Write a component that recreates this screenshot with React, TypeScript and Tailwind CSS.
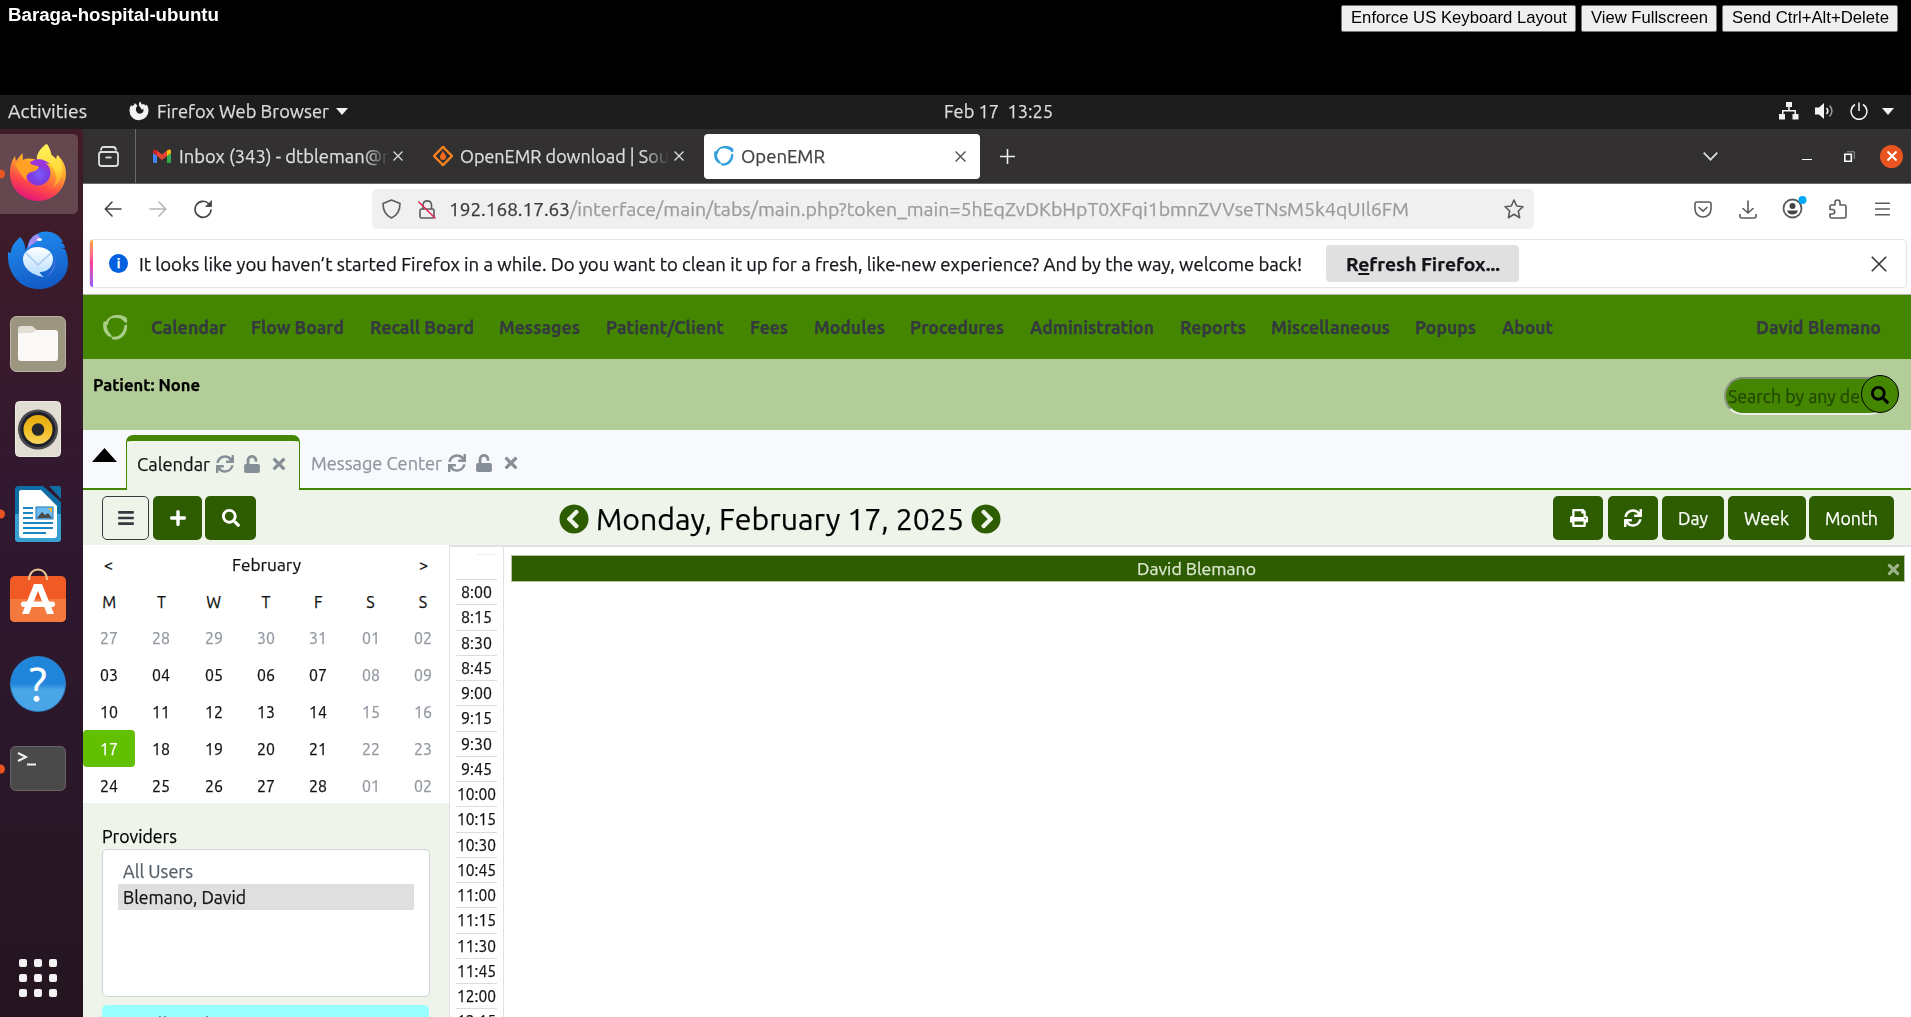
import { useLayoutEffect, useRef, type ReactNode } from "react";
import {
  FaBars, FaPlus, FaSearch, FaSync, FaUnlock, FaTimes, FaPrint, FaChevronCircleLeft, FaChevronCircleRight,
} from "react-icons/fa";

/* A single line of text stretched to an exact width. */
function T({ w, className = "", children }: { w: number; className?: string; children: ReactNode }) {
  const ref = useRef<HTMLSpanElement>(null);
  useLayoutEffect(() => {
    const el = ref.current;
    if (!el) return;
    el.style.transform = "none";
    const natural = el.getBoundingClientRect().width;
    el.style.transform = `scaleX(${w / natural})`;
  }, [w]);
  return (
    <span className={"block shrink-0 text-left whitespace-pre " + className} style={{ width: w }}>
      <span ref={ref} className="inline-block origin-left">{children}</span>
    </span>
  );
}

function HostBar() {
  const btn = "flex h-[27px] items-center justify-center rounded-[2px] border border-[#767676] bg-[#efefef] text-[17px] text-black pb-[2px]";
  return (
    <header className="flex h-[95px] items-start bg-black font-['Liberation_Sans',sans-serif]">
      <T w={211} className="mt-[3px] ml-2 text-[18px] leading-6 font-bold text-white">Baraga-hospital-ubuntu</T>
      <div className="mt-[5px] mr-[13px] ml-auto flex gap-[5px]">
        <button className={btn + " w-[235px]"}><T w={216}>Enforce US Keyboard Layout</T></button>
        <button className={btn + " w-[136px]"}><T w={117}>View Fullscreen</T></button>
        <button className={btn + " w-[176px]"}><T w={157}>Send Ctrl+Alt+Delete</T></button>
      </div>
    </header>
  );
}

function TopBar() {
  return (
    <div className="flex h-[34px] shrink-0 items-center bg-[#1d1d1d] pb-[2px] text-[18px] leading-none text-[#dcdcdc]">
      <T w={79} className="ml-2">Activities</T>
      <svg className="ml-[42px] shrink-0" width="20" height="20" viewBox="0 0 20 20" fill="none">
        <path d="M11 0.5c1 1 1.4 2 1.5 3 2-.4 3.3.2 4.2 1.2l.8-1.2c1.3 1.700 2 3.800 2 6A9.500 9.500 0 0 1 .5 10c0-2.500.6-4.600 1.700-6l.8 1.500c.6-.8 1.300-1.400 2.200-1.700L5.500 2l3 2.500-1.300 2c-1 2.500.7 6.200 3.300 6.200 3.200 0 4.600-2.200 3.800-5.200-.4 1-1 1.300-1.600 1.300C12 6.500 10.200 6 10 4c-.1-1.500.2-2.700 1-3.500z" fill="#f2f2f2" />
      </svg>
      <T w={172} className="ml-2">Firefox Web Browser</T>
      <svg className="ml-[7px]" width="12" height="7"><path d="M0 0h12L6 7z" fill="#f2f2f2" /></svg>
      <T w={109} className="ml-[596px]">Feb 17  13:25</T>
      <div className="ml-auto flex items-center pr-[17px] text-[#f2f2f2]">
        <svg className="mr-4" width="20" height="18" viewBox="0 0 20 18" fill="currentColor">
          <path d="M7 0h6v5H7zM0 12h6v5.500H0zM13.500 12h6v5.500h-6z" />
          <path d="M9.200 5h1.600v3H17v4h-1.500V9.500h-11V12H3V8h6.200z" />
        </svg>
        <svg className="mr-4" width="19" height="18" viewBox="0 0 19 18">
          <path d="M0 5.500h4L9 1v16l-5-4.500H0z" fill="currentColor" />
          <path d="M11.500 6c1.600 1.800 1.600 4.200 0 6" stroke="currentColor" strokeWidth="1.600" fill="none" />
          <path d="M14.500 3.500c3.200 3.200 3.200 7.800 0 11" stroke="#999" strokeWidth="1.600" fill="none" />
        </svg>
        <svg className="mr-[14px]" width="18" height="18" viewBox="0 0 18 18" fill="none" stroke="currentColor" strokeWidth="1.500">
          <path d="M9 .5V9M5 2.500a7.900 7.900 0 1 0 8 0" />
        </svg>
        <svg width="12" height="7"><path d="M0 0h12L6 7z" fill="currentColor" /></svg>
      </div>
    </div>
  );
}

function FirefoxIcon() {
  return (
    <svg width="56" height="58" viewBox="0 0 56 58">
      <defs>
        <linearGradient id="ffBody" x1="0.75" y1="0" x2="0.35" y2="1">
          <stop offset="0" stopColor="#ffe84b" /><stop offset="0.4" stopColor="#ffab2c" />
          <stop offset="0.72" stopColor="#ff4a48" /><stop offset="1" stopColor="#e3147c" />
        </linearGradient>
        <linearGradient id="ffFlame" x1="0.5" y1="0" x2="0.6" y2="1">
          <stop offset="0" stopColor="#fff25a" /><stop offset="0.6" stopColor="#ffd93c" /><stop offset="1" stopColor="#ff9a2b" />
        </linearGradient>
        <radialGradient id="ffGlobe" cx="0.55" cy="0.55" r="0.6">
          <stop offset="0" stopColor="#7b5cff" /><stop offset="0.6" stopColor="#7a3be0" /><stop offset="1" stopColor="#a531d6" />
        </radialGradient>
      </defs>
      <path d="M36 1c3 3 5 7 5.500 11 2 1 4 3 5.500 5l.500-5c6 5.500 8.500 12 8.500 19A28 27 0 0 1 0 31c0-8 1.500-13 5-18l1 5 6.500-8 .500 7c4-2 10-2 14 1 0-7 3-12 9-17z" fill="url(#ffBody)" />
      <path d="M37 1c-8 5-11 11-10 17 8-1 17 4 19 14 1 5-1 10-4 13 7-4 11-12 10-20-.500-5-2-9-5-13l-1 5c-1-2-3-4-5-5C40.500 8 39.500 4 37 1z" fill="url(#ffFlame)" />
      <circle cx="28" cy="30" r="12.500" fill="url(#ffGlobe)" />
      <path d="M18 22c3-6 14-9 22-1-3-1-5-1-7 0 4 2 6 5 6 8-4-4-8-6-12-5z" fill="#9a35dc" />
      <path d="M5 21c5-5 12-5 16 0 3 2 6 1 8 3-2 5-7 4-10 6-3 2-3 5-2 8-4-3-8-9-12-17z" fill="#ffa022" />
    </svg>
  );
}

function ThunderbirdIcon() {
  return (
    <svg width="60" height="58" viewBox="0 0 60 58">
      <defs>
        <linearGradient id="tbBody" x1="0.3" y1="0" x2="0.6" y2="1">
          <stop offset="0" stopColor="#1f8df0" /><stop offset="1" stopColor="#1359c4" />
        </linearGradient>
        <linearGradient id="tbMail" x1="0" y1="0" x2="0" y2="1">
          <stop offset="0" stopColor="#ffffff" /><stop offset="1" stopColor="#b3dcff" />
        </linearGradient>
      </defs>
      <path d="M12 6c-5 5-9 9-9 16L0 21c-1 14 4 24 12 31 12 9 30 8 40-2 9-8 10-21 5-32l-4-1h4c0-3-2-5-5-6h3C50 1 38-2 29 3c-5 2-8 6-9 11l-3 6C18 15 16 10 12 6z" fill="url(#tbBody)" />
      <path d="M20 17c0-6 3-11 9-14 3 2 4 5 1 7-3 1-5 3-10 7z" fill="#a58cf0" />
      <ellipse cx="31.500" cy="8.500" rx="2.500" ry="1.600" fill="#fff" />
      <path d="M46 24c2 10-2 20-10 22 8-1 13-10 10-22z" fill="#7a7bf0" />
      <path d="M30 16c8 0 15 5 15 12s-5 13-13 13c-1 0 1 3 4 5-8-1-20-6-21-17-.500-8 7-13 15-13z" fill="url(#tbMail)" />
      <path d="M18 22l12 12 13-12" fill="none" stroke="#a9cdee" strokeWidth="1.600" />
    </svg>
  );
}

function FilesIcon() {
  return (
    <svg width="56" height="56" viewBox="0 0 56 56">
      <rect x=".5" y=".5" width="55" height="55" rx="6" fill="#9c957f" stroke="#b9b3a3" />
      <path d="M8 14c0-3 1-4 4-4h10l5 4h5v8H8z" fill="#e2ded5" />
      <path d="M8 19c0-2 1-2 3-2h11l5-3h18c2 0 3 1 3 3v25c0 2-1 3-3 3H11c-2 0-3-1-3-3z" fill="#faf9f8" />
    </svg>
  );
}

function MusicIcon() {
  return (
    <svg width="46" height="56" viewBox="0 0 46 56">
      <defs>
        <linearGradient id="gold" x1="0" y1="0" x2="0" y2="1">
          <stop offset="0" stopColor="#e3a90d" /><stop offset="0.6" stopColor="#f3c02a" /><stop offset="1" stopColor="#f8d463" />
        </linearGradient>
      </defs>
      <rect x=".5" y=".5" width="45" height="55" rx="4" fill="#e2ddd3" stroke="#eeeae2" />
      <circle cx="23" cy="28.500" r="20" fill="#4a4b50" />
      <circle cx="23" cy="28.500" r="17.500" fill="#20202c" />
      <circle cx="23" cy="28.500" r="14.500" fill="url(#gold)" />
      <circle cx="23" cy="28.500" r="6.300" fill="#26272a" />
    </svg>
  );
}

function WriterIcon() {
  return (
    <svg width="46" height="56" viewBox="0 0 46 56">
      <path d="M4 0h24l18 16v36c0 3-1 4-4 4H4c-3 0-4-1-4-4V4c0-3 1-4 4-4z" fill="#0f6ea5" />
      <path d="M0 28h46v24c0 3-1 4-4 4H4c-3 0-4-1-4-4z" fill="#3aa0d2" />
      <path d="M34 0h10c1 0 2 1 2 2v11z" fill="#0f6ea5" />
      <path d="M6 4h20l16 16v29c0 2-1 3-3 3H7c-2 0-3-1-3-3V6c0-1 1-2 2-2z" fill="#fff" />
      <path d="M8 22h10M8 27h10M8 32h10M8 37h30M8 42h30M8 47h23" stroke="#1b86c4" strokeWidth="2.200" />
      <rect x="21" y="21" width="17" height="12" fill="#6cbcf0" stroke="#1b78b8" />
      <path d="M22 32l5-6 3 3 3-2 4 5z" fill="#4b4b4b" />
      <path d="M33 22h4v5z" fill="#f4b52c" />
    </svg>
  );
}

function StoreIcon() {
  return (
    <svg width="56" height="54" viewBox="0 0 56 54">
      <rect x="0" y="8" width="56" height="46" rx="5" fill="#f15a24" />
      <path d="M0 31h56v18c0 3-2 5-5 5H5c-3 0-5-2-5-5z" fill="#f3793f" />
      <path d="M19 12c0-14 18-14 18 0" fill="none" stroke="#eec890" strokeWidth="2" />
      <path d="M24 16h8l12 30h-7l-9-23-9 23h-7z" fill="#fff" />
      <rect x="11" y="33.500" width="34" height="5.500" rx="2.700" fill="#fff" />
    </svg>
  );
}

function Launcher() {
  const dot = <span className="absolute top-1/2 -left-1 size-[9px] -translate-y-1/2 rounded-full bg-[#e95420]" />;
  return (
    <aside className="flex w-[83px] shrink-0 flex-col bg-linear-to-b from-[#421c26] via-[#301830] via-45% to-[#241520]">
      <div className="relative mt-[5px] flex h-[80px] w-[78px] justify-center rounded-r-[5px] bg-[#65484f] pt-[9px] pr-[2px]">
        <FirefoxIcon />{dot}
      </div>
      <div className="mt-[17px] ml-2"><ThunderbirdIcon /></div>
      <div className="mt-[27px] ml-[10px]"><FilesIcon /></div>
      <div className="mt-[29px] ml-[15px]"><MusicIcon /></div>
      <div className="relative mt-[29px] pl-[15px]"><WriterIcon />{dot}</div>
      <div className="mt-[26px] ml-[10px]"><StoreIcon /></div>
      <div className="mt-[34px] ml-[10px] flex size-[56px] items-center justify-center rounded-full border border-[#2b80c5] bg-linear-to-b from-[#2086dc] from-50% to-[#49a5e6] to-60% text-[46px] leading-none text-white">
        <span>?</span>
      </div>
      <div className="relative mt-[34px] flex h-[45px] items-center pl-[10px]">
        <svg width="56" height="45" viewBox="0 0 56 45">
          <rect x=".5" y=".5" width="55" height="44" rx="5" fill="#4a4a4a" stroke="#6a6368" />
          <path d="M8 7l8 4-8 4M17 18.500h9" fill="none" stroke="#f2f2f2" strokeWidth="2" />
        </svg>
        {dot}
      </div>
      <div className="mt-auto mb-5 ml-[19px] grid w-[38px] grid-cols-3 gap-[7px]">
        {Array.from({ length: 9 }, (_, i) => <span key={i} className="size-2 rounded-[2px] bg-[#f2f2f2]" />)}
      </div>
    </aside>
  );
}

function X({ size, color, sw = 1.3 }: { size: number; color: string; sw?: number }) {
  return (
    <svg className="shrink-0" width={size} height={size} viewBox="0 0 10 10" stroke={color} strokeWidth={(sw * 10) / size}>
      <path d="M.5.5l9 9M9.500.5l-9 9" />
    </svg>
  );
}

/* Ring made of three overlapping brush strokes. */
function EmrLogo({ size, color }: { size: number; color: string }) {
  return (
    <svg className="shrink-0" width={size} height={size} viewBox="0 0 26 26" fill={color}>
      <path d="M4 5.500C9-1.500 18-1.500 24 2.500c1 .8 1.200 1.500 1 5.500l-2.500-.5C19 2 10 1.500 4 5.500z" />
      <path d="M.5 7c-1.500 8 1.500 14 7.500 16l1-2C5 18 3 13 4 6.500z" />
      <path d="M25 10c.5 5-1 9-4 12-3 3-7 4-11 3.500L8 22c7 2 13-1 14.500-11.500z" />
      <path d="M2.500 10c-.5-4 3-7.500 7.500-8.500-2.500 2.500-4.500 4.500-5 9z" />
    </svg>
  );
}

function TabStrip() {
  return (
    <div className="flex h-[55px] shrink-0 items-center border-b border-[#6a696b] bg-[#323031] text-[18px] leading-none text-[#dedede]">
      <svg className="ml-[15px] shrink-0" width="21" height="21" viewBox="0 0 21 21" fill="none" stroke="#dedede" strokeWidth="1.800">
        <path d="M3 4.500c0-3 1-3.500 3-3.500h9c2 0 3 .5 3 3.500" />
        <rect x="1" y="6" width="19" height="14" rx="2.500" /><path d="M7.500 11.500h6" />
      </svg>
      <span className="ml-[16px] h-full w-px bg-[#6a696b]" />
      <svg className="ml-[17px] shrink-0" width="18" height="14" viewBox="0 0 18 14">
        <path d="M0 2v10.500c0 .8.500 1.500 1.300 1.500H4V6z" fill="#4285f4" />
        <path d="M18 2v10.500c0 .8-.5 1.500-1.300 1.500H14V6z" fill="#34a853" />
        <path d="M4 1.500l5 4 5-4V7L9 11 4 7z" fill="#ea4335" />
        <path d="M0 2.200C0 .2 2 0 4 1.500V7L0 4z" fill="#c5221f" />
        <path d="M18 2.200c0-2-2-2.200-4-.7V7l4-3z" fill="#fbbc04" />
      </svg>
      <div className="ml-2 w-[210px] overflow-hidden py-1 [mask-image:linear-gradient(to_right,black_88%,transparent)]">
        <T w={210}>Inbox (343) - dtbleman@r</T>
      </div>
      <span className="ml-[4px]"><X size={10} color="#dedede" /></span>
      <svg className="ml-[30px] shrink-0" width="20" height="20" viewBox="0 0 20 20">
        <path d="M11.500 1.500L10 .8 1 10l8.500 8.500M8.500 18.500l1.500.7L19 10 10.500 1.500" fill="none" stroke="#f58220" strokeWidth="2.400" />
        <path d="M9.800 4.500c.5 2.500 3.200 3.500 3.200 6.500 0 2-1.300 3-3 3s-3-1.200-3-3c0-3 2.500-3.500 2.800-6.500z" fill="#f26a1b" />
      </svg>
      <div className="ml-[7px] w-[209px] overflow-hidden py-1 [mask-image:linear-gradient(to_right,black_88%,transparent)]">
        <T w={209}>OpenEMR download | Sou</T>
      </div>
      <span className="ml-[5px]"><X size={10} color="#dedede" /></span>
      <div className="ml-[20px] flex h-[45px] w-[276px] items-center rounded-[4px] bg-white pr-[14px] text-[#3f3f44]">
        <span className="ml-[10px]"><EmrLogo size={20} color="#35a0de" /></span>
        <T w={84} className="ml-[7px]">OpenEMR</T>
        <span className="ml-auto"><X size={11} color="#4a4a4f" /></span>
      </div>
      <svg className="ml-[20px] shrink-0" width="15" height="15" stroke="#eee" strokeWidth="1.600"><path d="M7.500 0v15M0 7.500h15" /></svg>
      <svg className="ml-[688px] shrink-0" width="15" height="9" fill="none" stroke="#dedede" strokeWidth="1.700"><path d="M.7.700l6.800 7 6.800-7" /></svg>
      <span className="mt-[7px] ml-[84px] h-[1.500px] w-[10px] bg-white" />
      <svg className="ml-[32px] shrink-0" width="11" height="11" fill="none"><rect x=".8" y="3.300" width="6.500" height="7" stroke="#fff" strokeWidth="1.600" /><path d="M3 .8h7.300V8" stroke="#9a9a9a" /></svg>
      <span className="ml-[25px] flex size-[23px] items-center justify-center rounded-full bg-[#e95420]"><X size={10} color="#fff" sw={2} /></span>
    </div>
  );
}

function UrlBar() {
  const s = { fill: "none", stroke: "#5b5b60", strokeWidth: 1.6, strokeLinejoin: "round", strokeLinecap: "round" } as const;
  return (
    <div className="flex h-[55px] shrink-0 items-center bg-white pb-[5px] text-[18px] leading-none">
      <svg className="ml-[21px] shrink-0" width="18" height="16" {...s} stroke="#444"><path d="M17 8H1.500M8 1L1.300 8 8 15" /></svg>
      <svg className="ml-[27px] shrink-0" width="18" height="16" {...s} stroke="#b5b5b5"><path d="M1 8h15.500M10 1l6.700 7-6.700 7" /></svg>
      <svg className="ml-[27px] shrink-0" width="19" height="19" viewBox="0 0 19 19" {...s} stroke="#444"><path d="M17 10a8 8 0 1 1-2-6" /><path d="M17.500 1v5.500H12z" fill="#444" strokeWidth=".8" /></svg>
      <div className="ml-[159px] flex h-[40px] w-[1162px] items-center rounded-[5px] bg-[#f0f0f0]">
        <svg className="ml-[10px] shrink-0" width="19" height="20" viewBox="0 0 19 20" {...s}><path d="M9.500 1L18 4.500c0 7-2 11.500-8.500 14.500C3 16 1 11.500 1 4.500z" /></svg>
        <svg className="ml-[17px] shrink-0" width="18" height="20" viewBox="0 0 18 20" {...s}><rect x="2" y="10" width="14" height="9" rx="1.500" /><path d="M5 10V5.500a4.300 4.300 0 0 1 8.500 0V10" /><path d="M.8 3L17 19" stroke="#e22850" /></svg>
        <T w={121} className="ml-[13px] text-[#3a3a3e]">192.168.17.63</T>
        <T w={839} className="text-[#9b9b9d]">/interface/main/tabs/main.php?token_main=5hEqZvDKbHpT0XFqi1bmnZVVseTNsM5k4qUIl6FM</T>
        <svg className="mr-[10px] ml-auto shrink-0" width="20" height="20" viewBox="0 0 20 20" {...s}><path d="M10 1l2.700 6 6.300.7-4.700 4.300 1.300 6.700L10 15.300l-5.600 3.400 1.300-6.700L1 7.700 7.300 7z" /></svg>
      </div>
      <svg className="ml-[160px] shrink-0" width="18" height="17" viewBox="0 0 18 17" {...s}><path d="M3 1h12c1.500 0 2 .5 2 2v5c0 5-4 8-8 8s-8-3-8-8V3c0-1.500.5-2 2-2zM5 6.500l4 3.700 4-3.700" /></svg>
      <svg className="ml-[27px] shrink-0" width="18" height="19" viewBox="0 0 18 19" {...s}><path d="M9 1v12M4 8.500L9 13l5-4.500M1 14.500V16c0 1.500.5 2 2 2h12c1.500 0 2-.5 2-2v-1.500" /></svg>
      <svg className="ml-[25px] shrink-0 -mt-1" width="25" height="24" viewBox="0 0 25 24" {...s}>
        <circle cx="10.500" cy="13.500" r="9" strokeWidth="1.800" /><circle cx="10.500" cy="11" r="3" fill="#444" stroke="none" />
        <path d="M5 15.500h11c-1 3-3 4-5.500 4s-4.500-1-5.500-4z" fill="#444" stroke="none" /><circle cx="20.500" cy="5" r="4" fill="#00a8f3" stroke="none" />
      </svg>
      <svg className="ml-[22px] shrink-0" width="18" height="20" viewBox="0 0 18 20" {...s}><path d="M6 6V3.500a2.500 2.500 0 0 1 5 0V6h4.500c1 0 1.500.5 1.500 1.500v10c0 1-.5 1.500-1.500 1.500H2.500C1.500 19 1 18.500 1 17.500V15h2.500a2.200 2.200 0 0 0 0-4.500H1v-3C1 6.500 1.500 6 2.500 6z" /></svg>
      <svg className="ml-[28px] shrink-0" width="15" height="14" {...s}><path d="M.7 1.200h13.600M.7 7h13.600M.7 12.800h13.600" /></svg>
    </div>
  );
}

function Notice() {
  return (
    <div className="flex h-[56px] shrink-0 items-start border-b border-[#b5b5b5] bg-[#fcfcfc] pl-[6px]">
      <div className="flex h-[49px] w-[1818px] overflow-hidden rounded-[4px] border border-[#e4e4e4] bg-white">
        <span className="w-[3px] bg-linear-to-b from-[#ffa436] via-[#f9399f] to-[#9059ff]" />
        <div className="flex flex-1 items-center text-[18px] leading-none text-[#15141a]">
          <span className="ml-[16px] flex size-[19px] items-center justify-center rounded-full bg-[#0060df] text-[13px] font-bold text-white">i</span>
          <T w={1163} className="ml-[11px] pt-[1px]">It looks like you haven’t started Firefox in a while. Do you want to clean it up for a fresh, like-new experience? And by the way, welcome back!</T>
          <button className="ml-[24px] flex h-[37px] w-[193px] items-center justify-center rounded-[4px] bg-[#e0e0e1] pt-[1px] font-bold">
            <T w={154}>R<span className="underline decoration-2 underline-offset-2">e</span>fresh Firefox...</T>
          </button>
          <span className="mr-[19px] ml-auto"><X size={16} color="#333" sw={1.6} /></span>
        </div>
      </div>
    </div>
  );
}

const MENU: [string, number, number][] = [
  ["Calendar", 151, 75], ["Flow Board", 251, 93], ["Recall Board", 370, 104], ["Messages", 499, 81],
  ["Patient/Client", 606, 118], ["Fees", 750, 38], ["Modules", 814, 71], ["Procedures", 910, 94],
  ["Administration", 1030, 124], ["Reports", 1180, 66], ["Miscellaneous", 1271, 119], ["Popups", 1415, 61], ["About", 1502, 51],
];

function EmrNav() {
  return (
    <nav className="flex h-[64px] shrink-0 items-center bg-[#448600] text-[17.500px] leading-none font-semibold text-[#343a40]">
      <span className="ml-5 w-[26px]"><EmrLogo size={25} color="#a9cd86" /></span>
      <div className="ml-[22px] flex pt-[1px]">
        {MENU.map(([label, x, w], i) => {
          const next = MENU[i + 1];
          return (
            <div key={label} style={{ width: next ? next[1] - x : w }}>
              <T w={w}>{label}</T>
            </div>
          );
        })}
      </div>
      <T w={125} className="mr-[30px] ml-auto pt-[1px]">David Blemano</T>
    </nav>
  );
}

function PatientBand() {
  return (
    <div className="flex h-[71px] shrink-0 items-start justify-between bg-[#b2cd98] text-black">
      <T w={107} className="mt-[17px] ml-[10px] text-[16.500px] leading-[18px] font-bold">Patient: None</T>
      <div className="relative mt-[17px] mr-[12px] flex h-[39px] w-[175px] items-start">
        <div className="mt-px flex h-[38px] w-[165px] items-center rounded-[19px] border-2 border-t-[#7f8a78] border-r-[#e9ece7] border-b-[#ececec] border-l-[#8a9482] bg-[#448600] text-[18px] leading-none text-[#234500]">
          <T w={132} className="ml-[2px]">Search by any de</T>
        </div>
        <span className="absolute top-[-1px] right-0 flex size-[38px] items-center justify-center rounded-full border border-black bg-[#448600] pt-px text-black"><FaSearch size={18} /></span>
      </div>
    </div>
  );
}

function TabIcons() {
  return (
    <>
      <FaSync size={18} className="ml-[6px] shrink-0" />
      <FaUnlock size={18} className="ml-[9px] shrink-0" />
      <FaTimes size={18} className="ml-[9px] shrink-0" />
    </>
  );
}

function FrameTabs() {
  return (
    <div className="flex h-[60px] shrink-0 bg-[#f8f9fc] text-[18px] leading-none">
      <div className="flex w-[43px] items-start border-b-2 border-[#448600] pt-[18px] pl-[9px]">
        <svg width="25" height="14"><path d="M12.500 0L25 14H0z" fill="#000" /></svg>
      </div>
      <div className="mt-[5px] flex w-[174px] items-center rounded-t-[7px] border-x border-t-[6px] border-[#448600] bg-[#eef4ea] pb-[3px] pl-[10px] text-[#111]">
        <T w={73}>Calendar</T>
        <div className="flex items-center text-[#868e96]"><TabIcons /></div>
      </div>
      <div className="flex flex-1 items-center border-b-2 border-[#448600] pt-[8px] pl-[11px] text-[#9095a0]">
        <T w={131}>Message Center</T>
        <div className="flex items-center text-[#868e96]"><TabIcons /></div>
      </div>
    </div>
  );
}

function Toolbar() {
  const b = "flex h-[44px] items-center justify-center rounded-[5px] bg-[#2d5d00] text-white";
  return (
    <div className="flex h-[55px] shrink-0 items-start bg-[#eef4ea] pt-[6px] text-[18px] leading-none">
      <div className="ml-[19px] flex">
        <button className="flex h-[44px] w-[47px] items-center justify-center rounded-[5px] border-[1.500px] border-[#343a40] text-[#343a40]"><FaBars size={18} /></button>
        <button className={b + " ml-1 w-[49px]"}><FaPlus size={18} /></button>
        <button className={b + " ml-[3px] w-[51px]"}><FaSearch size={18} /></button>
      </div>
      <div className="mt-[8px] ml-[303px] flex items-center text-[30.500px] text-black">
        <FaChevronCircleLeft size={30} color="#2d5d00" />
        <T w={368} className="ml-[7px]">Monday, February 17, 2025</T>
        <FaChevronCircleRight size={30} color="#2d5d00" className="ml-[7px]" />
      </div>
      <div className="mr-[17px] ml-auto flex">
        <button className={b + " w-[50px] pl-[2px]"}><FaPrint size={18} /></button>
        <button className={b + " ml-[5px] w-[50px]"}><FaSync size={18} /></button>
        <button className={b + " ml-1 w-[62px]"}><T w={30}>Day</T></button>
        <button className={b + " ml-1 w-[78px] pr-[2px]"}><T w={45}>Week</T></button>
        <button className={b + " ml-[3px] w-[85px]"}><T w={53}>Month</T></button>
      </div>
    </div>
  );
}

const WEEKS = [
  ["27", "28", "29", "30", "31", "01", "02"],
  ["03", "04", "05", "06", "07", "08", "09"],
  ["10", "11", "12", "13", "14", "15", "16"],
  ["17", "18", "19", "20", "21", "22", "23"],
  ["24", "25", "26", "27", "28", "01", "02"],
];

function DatePicker() {
  return (
    <div className="h-[258px] shrink-0 bg-white pt-[1px] text-[16px] leading-none text-[#111]">
      <div className="flex h-[38px] items-center justify-between px-[21px]">
        <span>&lt;</span><T w={69}>February</T><span>&gt;</span>
      </div>
      <div className="grid h-[36px] grid-cols-7 items-center text-center">
        {["M", "T", "W", "T", "F", "S", "S"].map((d, i) => <span key={i}>{d}</span>)}
      </div>
      {WEEKS.map((row, r) => (
        <div key={r} className="grid h-[36.800px] grid-cols-7 text-center">
          {row.map((d, c) => {
            const dim = c > 4 || r === 0;
            const today = r === 3 && c === 0;
            return (
              <span key={c} className={"flex items-center justify-center rounded-[4px] " + (today ? "bg-[#62c000] text-white" : dim ? "text-[#9298a0]" : "")}>
                <T w={18}>{d}</T>
              </span>
            );
          })}
        </div>
      ))}
    </div>
  );
}

function Sidebar() {
  return (
    <div className="flex w-[366px] shrink-0 flex-col overflow-hidden bg-[#eef4ea] text-[18px] leading-none">
      <DatePicker />
      <T w={75} className="mt-[24px] ml-[19px] text-black">Providers</T>
      <div className="mt-[4px] ml-[19px] h-[148px] w-[328px] shrink-0 rounded-[5px] border-[1.500px] border-[#ced4da] bg-white pt-[8px] pl-[15px]">
        <div className="flex h-[26px] items-center pl-[5px] text-[#555f68]"><T w={70}>All Users</T></div>
        <div className="flex h-[26px] w-[296px] items-center bg-[#dfdfdf] pl-[5px] text-[#111]"><T w={123}>Blemano, David</T></div>
      </div>
      <div className="mt-[8px] ml-[19px] h-[30px] w-[327px] shrink-0 rounded-t-[5px] bg-[#98ffff] pt-[10px] pl-[43px] text-[#555f68]">
        <T w={100}>All Facilities</T>
      </div>
    </div>
  );
}

const TIMES = Array.from({ length: 18 }, (_, i) => `${8 + Math.floor(i / 4)}:${String((i % 4) * 15).padStart(2, "0")}`);

function Schedule() {
  return (
    <div className="flex flex-1 overflow-hidden border-t-2 border-l border-[#dee2e6] bg-white">
      <div className="w-[54px] shrink-0 border-r border-[#dee2e6] px-[6px] text-center text-[16px] leading-none text-[#111]">
        <div className="flex h-[33px] justify-end border-b border-[#d9dde2] pt-[7px]"><span className="h-px w-5 bg-[#eceef0]" /></div>
        {TIMES.map((t) => (
          <div key={t} className="flex h-[25.250px] items-center justify-center border-b border-[#d9dde2]">
            <T w={t.length > 4 ? 39 : 31}>{t}</T>
          </div>
        ))}
      </div>
      <div className="mt-[8px] ml-[7px] flex h-[27px] w-[1394px] items-center border border-[#b5c4a8] bg-[#2d5d00] pt-px text-[16.500px] leading-none text-[#dde8d2]">
        <span className="flex flex-1 justify-center pr-[4px]"><T w={119}>David Blemano</T></span>
        <FaTimes size={17} color="#9db38b" className="mr-[2px]" />
      </div>
    </div>
  );
}

export default function App() {
  return (
    <div className="flex h-[1017px] w-[1911px] flex-col overflow-hidden bg-black">
      <HostBar />
      <div className="flex min-h-0 flex-1 flex-col font-['Ubuntu','Noto_Sans',sans-serif] [-webkit-text-stroke-width:0.25px]">
        <TopBar />
        <div className="flex min-h-0 flex-1">
          <Launcher />
          <main className="flex min-w-0 flex-1 flex-col">
            <TabStrip />
            <UrlBar />
            <Notice />
            <EmrNav />
            <PatientBand />
            <FrameTabs />
            <Toolbar />
            <div className="flex min-h-0 flex-1">
              <Sidebar />
              <Schedule />
            </div>
          </main>
        </div>
      </div>
    </div>
  );
}
